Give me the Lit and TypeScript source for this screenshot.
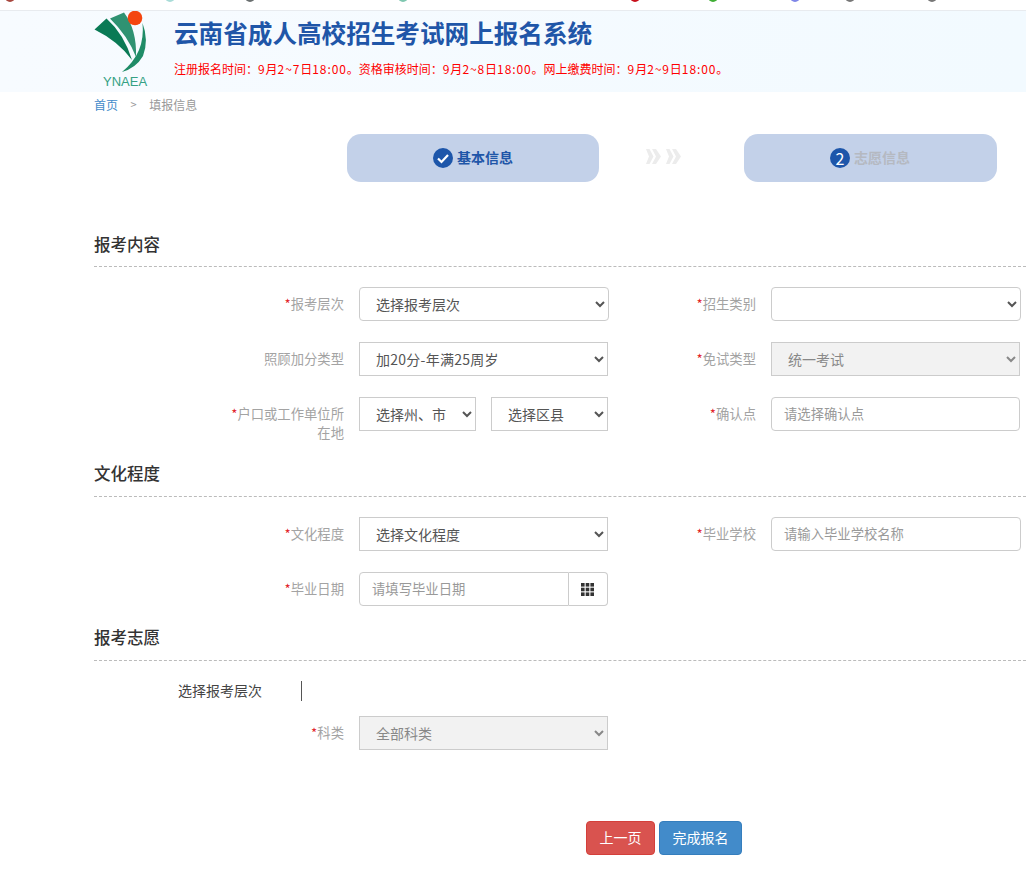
import { LitElement, html, css } from "lit";
import { customElement } from "lit/decorators.js";

const favicons: [number, string][] = [
  [10, "#a8483f"], [170, "#a9dcd8"], [250, "#6a6f70"], [403, "#7fc7b0"],
  [635, "#c8101c"], [713, "#3fae35"], [795, "#7f86e8"], [850, "#777"], [932, "#777"],
];

@customElement("app-root")
export class AppRoot extends LitElement {
  static styles = css`
    :host { display: block; width: 1026px; height: 882px; overflow: hidden; background: #fff;
      font-family: "Noto Sans CJK SC", "Noto Sans", sans-serif; font-size: 13.33px; color: #333; }
    * { box-sizing: border-box; }
    .strip { position: relative; height: 11px; overflow: hidden; border-bottom: 1px solid #e8ebef; background: #fff; }
    .fav { position: absolute; top: -8px; width: 10px; height: 10px; border-radius: 50%; }
    .top { height: 81px; padding-left: 90px; display: flex; background: linear-gradient(90deg, #f7fbff, #f2faff); }
    .logo { width: 65px; height: 81px; display: block; flex: none; }
    .top-text { margin-left: 19px; display: flex; flex-direction: column; }
    .title { margin: 5px 0 0; font-size: 24.6px; line-height: 32px; font-weight: 700; color: #1f56a8; white-space: nowrap; }
    .notice { margin-top: 12px; font-size: 12px; line-height: 18px; color: #f00; white-space: nowrap; }
    .notice span { letter-spacing: .9px; }
    .crumbs { height: 24px; padding-left: 94px; display: flex; align-items: center; font-size: 12px; color: #999; }
    .crumbs a { color: #428bca; }
    .crumbs .sep { margin: 0 12.5px; font-size: 11px; }
    .steps { margin: 18px 0 0 347px; display: flex; }
    .step { width: 252px; height: 48px; border-radius: 14px; background: #c3d1e9; display: flex; align-items: center;
      justify-content: center; gap: 4px; font-size: 14px; font-weight: 700; color: #1f56a8; }
    .step.off { width: 253px; padding-right: 1px; color: #b5b9c1; }
    .lbl { line-height: 18px; margin-top: -2px; }
    .num { width: 20px; height: 20px; border-radius: 50%; background: #1d56aa; color: #fff; font-weight: 400; font-size: 16px;
      display: flex; align-items: center; justify-content: center; line-height: 20px; }
    .step svg { display: block; }
    .arrows { width: 145px; padding: 0 0 3px 47px; display: flex; align-items: center; }
    .section { margin: 0 0 0 94px; padding-bottom: 11px; border-bottom: 1px dashed #bbb; font-size: 16.5px; line-height: 22px; font-weight: 500; color: #333; }
    .s1 { margin-top: 51px; }
    .s2 { margin-top: 20px; padding-bottom: 12px; }
    .s3 { margin-top: 20px; padding-bottom: 12px; }
    .rows { margin-top: 20px; display: flex; flex-direction: column; gap: 21px; }
    .row { display: flex; align-items: flex-start; }
    .lab { line-height: 19px; padding-top: 7px; text-align: right; color: #a3a3a3; flex: none; }
    .lab i { color: #e2232a; font-style: normal; }
    .lab.l { width: 344px; }
    .lab.r { width: 148px; }
    .lab.r.n { width: 147px; }
    .ctl { margin-left: 15px; width: 249px; flex: none; }
    .ctl.w250 { width: 250px; }
    .pair { display: flex; gap: 15px; }
    .pair select { width: 117px; }
    select, input { display: block; width: 100%; height: 34px; padding: 5px 12px 7px; font: inherit; font-size: 14px; line-height: 20px;
      color: #555; background-color: #fff; border: 1px solid #ccc; border-radius: 0; outline: none; }
    input { font-size: 13.33px; }
    input::placeholder { color: #999; opacity: 1; }
    .round { border-radius: 4px; }
    .sp { letter-spacing: .25px; }
    select[disabled] { background-color: #f2f2f2; color: #888; opacity: 1; }
    .grp { display: flex; }
    .grp input { flex: 1; min-width: 0; border-radius: 4px 0 0 4px; }
    .addon { width: 39px; height: 34px; padding-right: 2px; flex: none; border: 1px solid #ccc; border-left: 0; border-radius: 0 4px 4px 0;
      display: flex; align-items: center; justify-content: center; }
    .pick { margin: 20px 0 0 178px; display: flex; height: 20px; align-items: center; font-size: 14px; color: #444; }
    .pick span { width: 123px; line-height: 18px; height: 20px; }
    .pick b { width: 1px; height: 20px; background: #555; display: block; }
    .last { margin-top: 15px; }
    .btns { margin: 71px 0 0 586px; display: flex; gap: 4px; }
    .btn { height: 34px; padding: 0 12px 2px; border: 1px solid; border-radius: 4px; color: #fff; font: inherit; font-size: 14px; line-height: 20px; }
    .red { width: 69px; background: #d9534f; border-color: #d43f3a; }
    .blue { width: 83px; background: #428bca; border-color: #357ebd; }
    .logo-t { font-family: "Liberation Sans", sans-serif; font-size: 13px; fill: #35a184; }
  `;

  private sel(text: string, cls = "", disabled = false) {
    return html`<select class=${cls} ?disabled=${disabled}><option>${text}</option></select>`;
  }

  render() {
    return html`
      <div class="strip">${favicons.map(([x, c]) => html`<span class="fav" style="left:${x - 5}px;background:${c}"></span>`)}</div>
      <header class="top">
        <svg class="logo" viewBox="90 11 65 81" aria-label="YNAEA">
          <path d="M94.5 29.5 L106.5 18.5 Q124 34 132 60 Q118 41 94.5 29.5z" fill="#0a7a55"/>
          <path d="M110 18.5 L124 12.5 Q137 30 136 57 Q128 36 110 18.5z" fill="#2f9272"/>
          <path d="M142.5 23 Q149 40 143 56 Q136 68 122 72 Q134 62 139 50 Q144 38 142.5 23z" fill="#1f8c67"/>
          <circle cx="135" cy="18" r="7.3" fill="#f4450f"/>
          <text class="logo-t" x="103" y="85.5">YNAEA</text>
        </svg>
        <div class="top-text">
          <h1 class="title">云南省成人高校招生考试网上报名系统</h1>
          <div class="notice">注册报名时间：<span>9</span>月<span>2~7</span>日<span>18:00</span>。资格审核时间：<span>9</span>月<span>2~8</span>日<span>18:00</span>。网上缴费时间：<span>9</span>月<span>2~9</span>日<span>18:00</span>。</div>
        </div>
      </header>
      <nav class="crumbs"><a>首页</a><span class="sep">&gt;</span><span>填报信息</span></nav>

      <div class="steps">
        <div class="step">
          <svg width="20" height="20" viewBox="0 0 20 20"><circle cx="10" cy="10" r="10" fill="#1d56aa"/><path d="M5 10.5l3.5 3.5L15 7" fill="none" stroke="#fff" stroke-width="2.2"/></svg>
          <span class="lbl">基本信息</span>
        </div>
        <div class="arrows">
          <svg width="35" height="15" viewBox="0 0 35 15"><g fill="#ececec">
            <path d="M0 0h3.5l4 7.5-4 7.5H0l3-7.5z"/><path d="M6 0h4l5 7.5-5 7.5H6l4-7.5z"/>
            <path d="M20 0h3.5l4 7.5-4 7.5H20l3-7.5z"/><path d="M26 0h4l5 7.5-5 7.5h-4l4-7.5z"/></g></svg>
        </div>
        <div class="step off"><span class="num">2</span><span class="lbl">志愿信息</span></div>
      </div>

      <h2 class="section s1">报考内容</h2>
      <div class="rows">
        <div class="row">
          <label class="lab l"><i>*</i>报考层次</label>
          <div class="ctl w250">${this.sel("选择报考层次", "round")}</div>
          <label class="lab r n"><i>*</i>招生类别</label>
          <div class="ctl w250">${this.sel("", "round")}</div>
        </div>
        <div class="row">
          <label class="lab l">照顾加分类型</label>
          <div class="ctl">${this.sel("加20分-年满25周岁", "sp")}</div>
          <label class="lab r"><i>*</i>免试类型</label>
          <div class="ctl">${this.sel("统一考试", "", true)}</div>
        </div>
        <div class="row">
          <label class="lab l"><i>*</i>户口或工作单位所<br />在地</label>
          <div class="ctl pair">${this.sel("选择州、市")}${this.sel("选择区县")}</div>
          <label class="lab r"><i>*</i>确认点</label>
          <div class="ctl"><input class="round" placeholder="请选择确认点" /></div>
        </div>
      </div>

      <h2 class="section s2">文化程度</h2>
      <div class="rows">
        <div class="row">
          <label class="lab l"><i>*</i>文化程度</label>
          <div class="ctl">${this.sel("选择文化程度")}</div>
          <label class="lab r"><i>*</i>毕业学校</label>
          <div class="ctl w250"><input class="round" placeholder="请输入毕业学校名称" /></div>
        </div>
        <div class="row">
          <label class="lab l"><i>*</i>毕业日期</label>
          <div class="ctl grp">
            <input placeholder="请填写毕业日期" />
            <div class="addon">
              <svg width="13" height="13" viewBox="0 0 13 13" fill="#333">
                <rect width="3.6" height="3.6"/><rect x="4.7" width="3.6" height="3.6"/><rect x="9.4" width="3.6" height="3.6"/>
                <rect y="4.7" width="3.6" height="3.6"/><rect x="4.7" y="4.7" width="3.6" height="3.6"/><rect x="9.4" y="4.7" width="3.6" height="3.6"/>
                <rect y="9.4" width="3.6" height="3.6"/><rect x="4.7" y="9.4" width="3.6" height="3.6"/><rect x="9.4" y="9.4" width="3.6" height="3.6"/>
              </svg>
            </div>
          </div>
        </div>
      </div>

      <h2 class="section s3">报考志愿</h2>
      <div class="pick"><span>选择报考层次</span><b></b></div>
      <div class="row last">
        <label class="lab l"><i>*</i>科类</label>
        <div class="ctl">${this.sel("全部科类", "", true)}</div>
      </div>

      <div class="btns">
        <button class="btn red">上一页</button>
        <button class="btn blue">完成报名</button>
      </div>
    `;
  }
}
